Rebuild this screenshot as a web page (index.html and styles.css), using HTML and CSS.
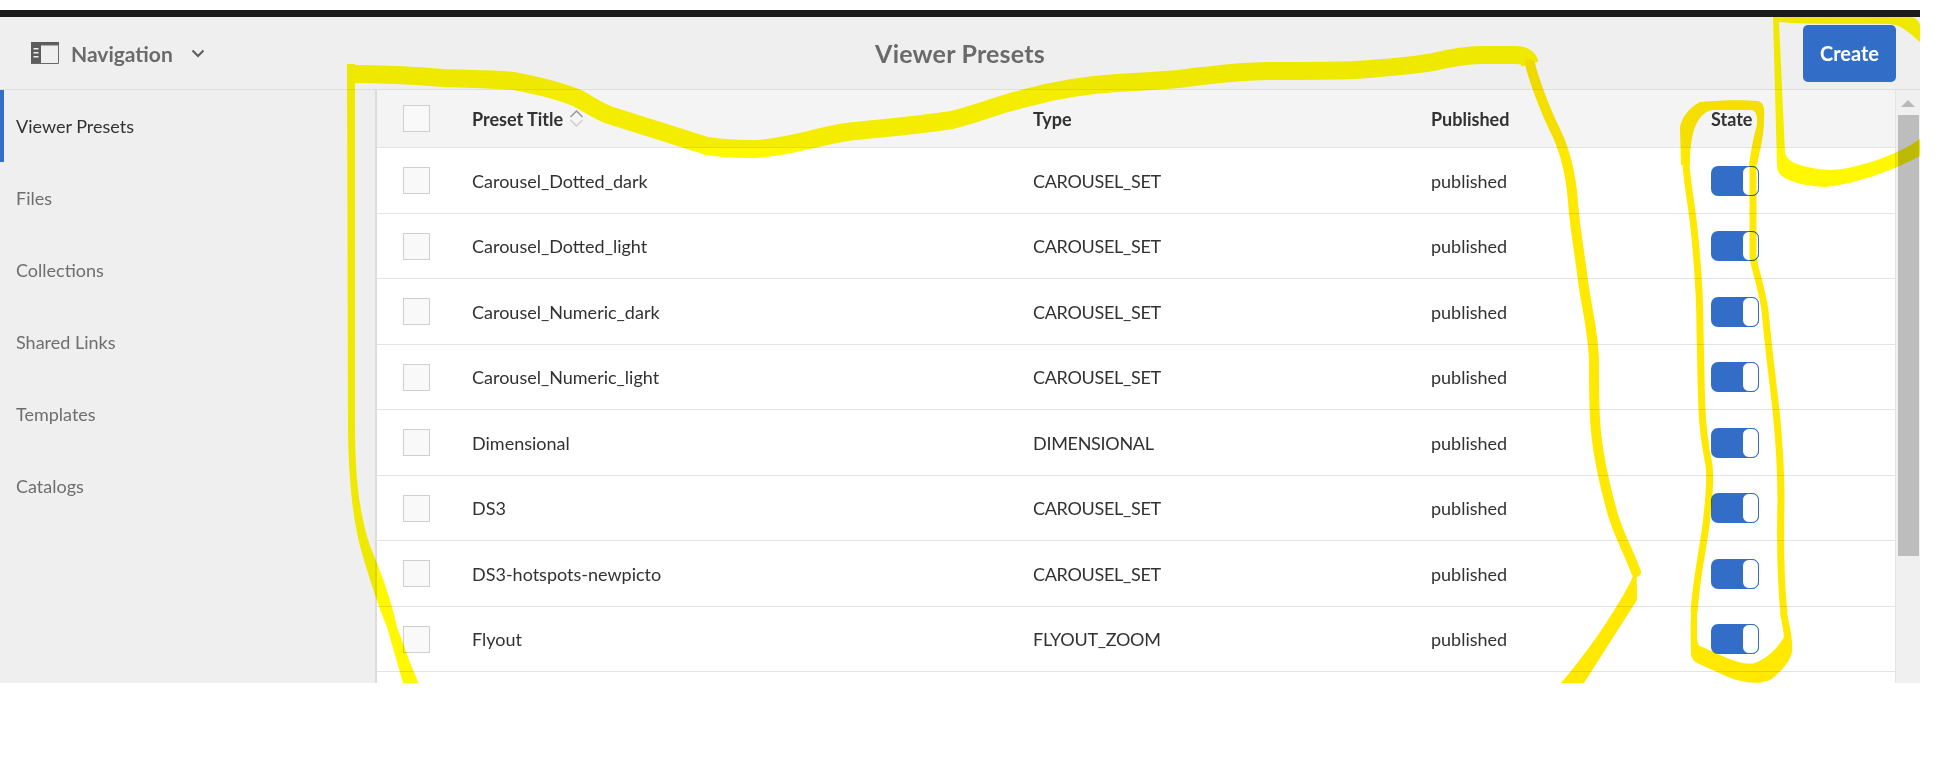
FILE: index.html
```html
<!DOCTYPE html>
<html lang="en">
<head>
<meta charset="utf-8">
<title>Viewer Presets</title>
<link rel="stylesheet" href="styles.css">
</head>
<body>
<div class="app">
  <div class="topbar"></div>
  <header class="header">
    <div class="nav-toggle">
      <svg class="rail-icon" width="28" height="22" viewBox="0 0 28 22"><path class="rail-dark" d="M0 0h28v3H10v18h-10z"/><path class="rail-line" d="M10 3h17.5v18.5H0"/><path class="rail-notch" d="M2.5 6h5v1.6h-5zM2.5 10h5v1.6h-5zM2.5 14h5v1.6h-5z"/></svg>
      <span class="nav-label">Navigation</span>
      <svg class="chevron" width="14" height="9" viewBox="0 0 14 9"><path d="M1.5 1.5 7 7l5.500-5.500"/></svg>
    </div>
    <h1 class="page-title">Viewer Presets</h1>
    <div class="header-actions"><button class="create-btn">Create</button></div>
  </header>
  <div class="main">
    <nav class="sidebar">
      <a class="side-item active">Viewer Presets</a>
      <a class="side-item">Files</a>
      <a class="side-item">Collections</a>
      <a class="side-item">Shared Links</a>
      <a class="side-item">Templates</a>
      <a class="side-item">Catalogs</a>
    </nav>
    <section class="table">
      <div class="row head">
        <span class="check"></span>
        <span class="title-cell">Preset Title <svg class="sort" width="15" height="17" viewBox="0 0 15 17"><path class="sort-up" d="M1.500 7 7.500 1l6 6"/><path class="sort-down" d="M1.500 10l6 6 6-6"/></svg></span>
        <span>Type</span><span>Published</span><span>State</span>
      </div>
      <div class="row"><span class="check"></span><span>Carousel_Dotted_dark</span><span>CAROUSEL_SET</span><span>published</span><span class="switch"><i class="knob"></i></span></div>
      <div class="row"><span class="check"></span><span>Carousel_Dotted_light</span><span>CAROUSEL_SET</span><span>published</span><span class="switch"><i class="knob"></i></span></div>
      <div class="row"><span class="check"></span><span>Carousel_Numeric_dark</span><span>CAROUSEL_SET</span><span>published</span><span class="switch"><i class="knob"></i></span></div>
      <div class="row"><span class="check"></span><span>Carousel_Numeric_light</span><span>CAROUSEL_SET</span><span>published</span><span class="switch"><i class="knob"></i></span></div>
      <div class="row"><span class="check"></span><span>Dimensional</span><span>DIMENSIONAL</span><span>published</span><span class="switch"><i class="knob"></i></span></div>
      <div class="row"><span class="check"></span><span>DS3</span><span>CAROUSEL_SET</span><span>published</span><span class="switch"><i class="knob"></i></span></div>
      <div class="row"><span class="check"></span><span>DS3-hotspots-newpicto</span><span>CAROUSEL_SET</span><span>published</span><span class="switch"><i class="knob"></i></span></div>
      <div class="row"><span class="check"></span><span>Flyout</span><span>FLYOUT_ZOOM</span><span>published</span><span class="switch"><i class="knob"></i></span></div>
    </section>
    <div class="scrollbar">
      <svg class="scroll-up" width="14" height="7" viewBox="0 0 14 7"><path d="M7 0l7 7H0z"/></svg>
      <div class="scroll-thumb"></div>
    </div>
  </div>
  <svg class="scribble" width="1920" height="673" viewBox="0 10 1920 673">
    <g class="ink">
      <path class="fill hi" d="M347 64H355V424C355 470 358 510 370 546C380 570 390 595 397 627C404 645 410 665 422 690H405C398 665 392 645 387 627C378 605 368 575 360 546C352 515 348 470 348 424Z"/>
      <path class="w18 hi butt" d="M348 74C380 74 410 75 443 78C470 79 495 79 514 81C540 86 560 91 577 98C590 105 598 111 609 115L707 146C725 149 740 149 755 149C790 147 815 137 846 132C880 128 905 127 952 120C980 113 1000 104 1026 98C1055 90 1085 85 1117 83C1140 82 1155 81 1178 79C1210 75 1240 71 1269 71C1300 71 1330 71 1355 70C1385 68 1410 66 1433 62C1450 58 1465 55 1481 55H1516C1524 55 1528 57 1530 64"/>
      <path class="w10" d="M1530 64C1534 80 1545 110 1555 130C1566 152 1571 175 1573 202C1575 230 1580 255 1583 281C1587 310 1593 330 1594 360C1594 385 1594 400 1595 420C1597 450 1603 480 1613 515C1619 535 1630 555 1636 572"/>
      <path class="fill" d="M1636 568C1637 575 1637 590 1637 600L1584 683H1561C1585 655 1610 620 1630 583Z"/>
      <path class="fill" d="M1680 127C1682 118 1688 108 1700 102C1720 100 1745 100 1757 101C1764 102 1765 108 1764 120C1764 135 1760 150 1757 165H1749C1751 150 1754 135 1757 125V117C1756 112 1754 110 1750 110H1712C1700 113 1690 125 1690 165H1681Z"/>
      <path class="w7 butt" d="M1686 165C1688 190 1692 205 1695 238C1698 270 1700 295 1700 330C1701 370 1701 390 1702 410C1703 435 1706 450 1709 465C1711 480 1709 500 1706 525C1702 555 1696 580 1694 613"/>
      <path class="w7 butt" d="M1753 165C1753 190 1753 225 1753 257C1755 270 1761 285 1765 310C1768 345 1772 375 1776 410C1779 440 1781 470 1781 500C1780 545 1781 585 1784 613"/>
      <path class="fill" d="M1691 613C1690 630 1691 645 1691 655Q1692 660 1697 663L1728 677C1745 684 1765 685 1773 678C1782 670 1790 662 1792 652C1793 640 1790 628 1787 613H1780C1782 625 1784 632 1784 637C1778 648 1768 658 1755 663C1745 665 1735 661 1727 658L1700 646Q1697 644 1697 637V613Z"/>
      <path class="fill hi" d="M1773 17H1910C1916 17 1920 22 1920 26V42C1908 32 1902 25 1890 24C1850 23 1812 25 1779 22L1785 152C1786 158 1790 162 1800 165C1825 172 1840 171 1860 165C1880 160 1905 150 1920 139V156C1890 172 1855 184 1825 187C1805 186 1790 182 1782 176C1779 174 1777 170 1777 165Z"/>
    </g>
  </svg>
</div>
</body>
</html>
```

FILE: styles.css
```css
* { box-sizing: border-box; }
html, body { margin: 0; padding: 0; background: #fff; }
body { font-family: "Lato", "Noto Sans", sans-serif; color: #323232; font-size: 18px; height: 767px; overflow: hidden; }
.app { position: relative; width: 1920px; height: 673px; margin-top: 10px; background: #efefef; display: flex; flex-direction: column; overflow: hidden; }
.topbar { height: 7px; background: #1b1b1b; flex: none; }
.header { height: 73px; flex: none; display: grid; grid-template-columns: 1fr auto 1fr; align-items: center; border-bottom: 1px solid #dedede; padding: 0 24px; }
.nav-toggle { display: flex; align-items: center; color: #6a6a6a; margin-left: 7px; }
.rail-dark { fill: #5c5c5c; }
.rail-line { fill: none; stroke: #6a6a6a; stroke-width: 1; }
.rail-notch { fill: #efefef; }
.nav-label { font-size: 21px; font-weight: 700; margin-left: 12px; }
.chevron { margin-left: 18px; }
.chevron path { fill: none; stroke: #5c5c5c; stroke-width: 2; }
.page-title { margin: 0; font-size: 25px; font-weight: 700; letter-spacing: 0.2px; color: #6a6a6a; }
.header-actions { display: flex; justify-content: flex-end; }
.create-btn { width: 93px; height: 57px; border: 0; border-radius: 5px; background: #326ec8; color: #fff; font: 700 20px "Lato", "Noto Sans", sans-serif; }
.main { flex: 1; display: flex; min-height: 0; }
.sidebar { width: 377px; flex: none; border-right: 2px solid #dcdcdc; }
.side-item { display: flex; align-items: center; height: 72px; padding-left: 16px; color: #6e6e6e; }
.side-item.active { color: #323232; border-left: 4px solid #326ec8; padding-left: 12px; }
.table { flex: 1; background: #fff; overflow: hidden; }
.row { display: grid; grid-template-columns: 69px 561px 398px 280px 1fr; align-items: center; height: 65.5px; padding-left: 26px; padding-top: 1px; border-bottom: 1px solid #e4e4e4; }
.row > :nth-child(3) { letter-spacing: -0.3px; }
.row.head { height: 58px; padding-top: 0; background: #f4f4f4; font-weight: 700; }
.row.head > :nth-child(3) { letter-spacing: 0; }
.title-cell { display: flex; align-items: center; gap: 6px; }
.sort path { fill: none; stroke-width: 1.500; }
.sort-up { stroke: #9a9a9a; }
.sort-down { stroke: #cfcfcf; }
.check { display: block; width: 27px; height: 27px; background: #f9f9f9; border: 1px solid #cfcfcf; }
.switch { display: flex; justify-content: flex-end; width: 48px; height: 30px; border-radius: 7px; background: #326ec8; }
.knob { display: block; width: 17px; height: 30px; border-radius: 7px; background: #fff; border: 1px solid #326ec8; }
.scrollbar { width: 25px; flex: none; background: #f0f0f0; border-left: 1px solid #e4e4e4; display: flex; flex-direction: column; align-items: center; padding-top: 10px; }
.scroll-up { fill: #b9b9b9; flex: none; }
.scroll-thumb { width: 21px; height: 441px; margin-top: 8px; background: #bdbdbd; flex: none; }
.scribble { position: absolute; left: 0; top: 0; mix-blend-mode: multiply; pointer-events: none; }
.ink path { fill: none; stroke: #ffe900; stroke-linecap: round; stroke-linejoin: round; }
.ink path.butt { stroke-linecap: butt; }
.ink path.hi { stroke: #fff800; }
.ink path.fill { fill: #ffe900; stroke: none; }
.ink path.fill.hi { fill: #fff800; stroke: none; }
.ink .w7 { stroke-width: 7px; }
.ink .w10 { stroke-width: 10px; }
.ink .w18 { stroke-width: 18px; }
```
